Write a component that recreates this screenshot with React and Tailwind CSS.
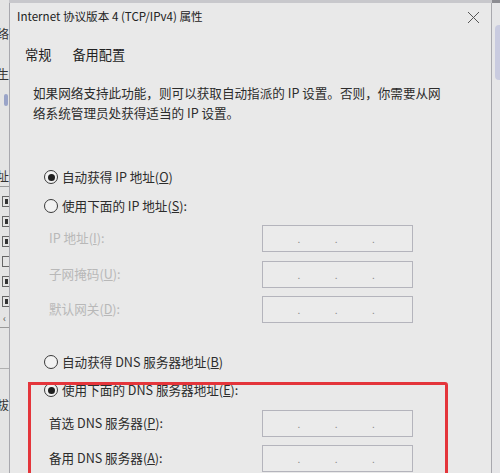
import React from 'react';

// ===== IPv4 properties dialog =====
// A Windows-style "Internet 协议版本 4" dialog, photographed over other windows.

const FONT = "font-['Noto_Sans_CJK_SC','Noto_Sans',sans-serif]";

function Radio({ checked, children, disabled = false }) {
  return (
    <div className="flex items-center h-[22px] pl-[34px]">
      <span className="w-[14px] h-[14px] rounded-full border border-[#3a3a3a] bg-[#f2f2f2] flex items-center justify-center shrink-0">
        {checked && <span className="w-[7px] h-[7px] rounded-full bg-[#1f1f1f]" />}
      </span>
      <span className={`ml-[4px] text-[12.6px] leading-none ${disabled ? 'text-[#b3b3b3]' : 'text-[#2c2c2c]'}`}>
        {children}
      </span>
    </div>
  );
}

function IpBox() {
  return (
    <div className="w-[151px] h-[27px] border border-[#b4b4bc] bg-[#ebebeb] grid grid-cols-4 items-center shrink-0">
      {[0, 1, 2, 3].map((i) => (
        <span key={i} className="flex justify-end pr-[0px] text-[10px] leading-none text-[#8a8a8a]">
          {i < 3 ? '.' : ''}
        </span>
      ))}
    </div>
  );
}

function Field({ label, hotkey, tail = '):', disabled = false }) {
  return (
    <div className="flex items-center h-[27px] pl-[39px]">
      <span className={`w-[213px] text-[12.6px] leading-none ${disabled ? 'text-[#b8b8b8]' : 'text-[#2c2c2c]'}`}>
        {label}(<u>{hotkey}</u>{tail}
      </span>
      <IpBox />
    </div>
  );
}

function LeftStrip() {
  const boxes = [206, 226, 248, 274, 296, 318];
  return (
    <div className="w-[9px] h-full bg-[#e4e4e4] flex flex-col overflow-hidden text-[12px] text-[#333] leading-none">
      <div className="h-[28px]" />
      <div className="flex justify-end whitespace-nowrap">络</div>
      <div className="h-[28px]" />
      <div className="flex justify-end whitespace-nowrap">生</div>
      <div className="h-[14px]" />
      <div className="ml-[4px] w-[4px] h-[12px] rounded-sm bg-[#9aa4c8]" />
      <div className="h-[64px]" />
      <div className="flex justify-end whitespace-nowrap">址</div>
      <div className="mt-[4px] h-px bg-[#9a9a9a]" />
      {boxes.map((y, i) => (
        <div key={y} className="mt-[9px] ml-[2px] w-[8px] h-[11px] border border-[#666] flex items-center justify-center">
          {i !== 3 && <span className="w-[3px] h-[5px] bg-[#333]" />}
        </div>
      ))}
      <div className="mt-[6px] ml-[3px] text-[10px] text-[#555]">‹</div>
      <div className="mt-[4px] h-px bg-[#9a9a9a]" />
      <div className="mt-[40px] h-px bg-[#b0b0b0]" />
      <div className="mt-[30px] flex justify-end whitespace-nowrap">拔</div>
    </div>
  );
}

function RightStrip() {
  return (
    <div className="w-[8px] h-full bg-[#e6e6e8] flex flex-col">
      <div className="h-[3px] bg-[#8c8c92]" />
      <div className="mt-[22px] ml-[3px] w-[5px] h-[55px] bg-[#c9cbe0] rounded-l-sm" />
    </div>
  );
}

export default function App() {
  return (
    <div className={`w-[500px] h-[473px] overflow-hidden flex bg-[#e2e2e2] ${FONT}`}>
      <LeftStrip />

      {/* Dialog */}
      <div className="relative w-[483px] h-full flex flex-col">
        <div className="h-[3px] bg-[#c8c8cc]" />
        <div className="flex-1 flex flex-col bg-[#e9e9e9] border-l border-r border-[#a8a8ae]">
          {/* Title bar */}
          <div className="h-[28px] flex items-center justify-between pl-[7px] pr-[11px]">
            <span className="text-[11.6px] text-[#222] leading-none">
              Internet 协议版本 4 (TCP/IPv4) 属性
            </span>
            <svg width="13" height="13" viewBox="0 0 13 13" className="text-[#555]">
              <path d="M1 1 L12 12 M12 1 L1 12" stroke="currentColor" strokeWidth="1" />
            </svg>
          </div>

          {/* Tabs */}
          <div className="mt-[9px] h-[30px] flex items-center pl-[15px] text-[13.2px] text-[#222] leading-none">
            <span>常规</span>
            <span className="ml-[21px]">备用配置</span>
          </div>

          {/* Description */}
          <p className="mt-[13px] pl-[23px] text-[12.6px] leading-[20px] text-[#2c2c2c] whitespace-nowrap">
            如果网络支持此功能，则可以获取自动指派的 IP 设置。否则，你需要从网
            <br />
            络系统管理员处获得适当的 IP 设置。
          </p>

          <div className="mt-[43px]">
            <Radio checked>
              自动获得 IP 地址(<u>O</u>)
            </Radio>
          </div>
          <div className="mt-[7px]">
            <Radio>
              使用下面的 IP 地址(<u>S</u>):
            </Radio>
          </div>

          <div className="mt-[8px]">
            <Field label="IP 地址" hotkey="I" disabled />
          </div>
          <div className="mt-[9px]">
            <Field label="子网掩码" hotkey="U" disabled />
          </div>
          <div className="mt-[8px]">
            <Field label="默认网关" hotkey="D" disabled />
          </div>

          <div className="mt-[28px]">
            <Radio>
              自动获得 DNS 服务器地址(<u>B</u>)
            </Radio>
          </div>
          <div className="mt-[6px]">
            <Radio checked>
              使用下面的 DNS 服务器地址(<u>E</u>):
            </Radio>
          </div>

          <div className="mt-[9px]">
            <Field label="首选 DNS 服务器" hotkey="P" />
          </div>
          <div className="mt-[8px]">
            <Field label="备用 DNS 服务器" hotkey="A" />
          </div>
        </div>

        {/* Red annotation drawn over the DNS section */}
        <div className="absolute left-[19px] top-[382px] w-[420px] h-[120px] border-[3px] border-[#e4353b] rounded-tr-[3px] pointer-events-none" />
      </div>

      <RightStrip />
    </div>
  );
}
